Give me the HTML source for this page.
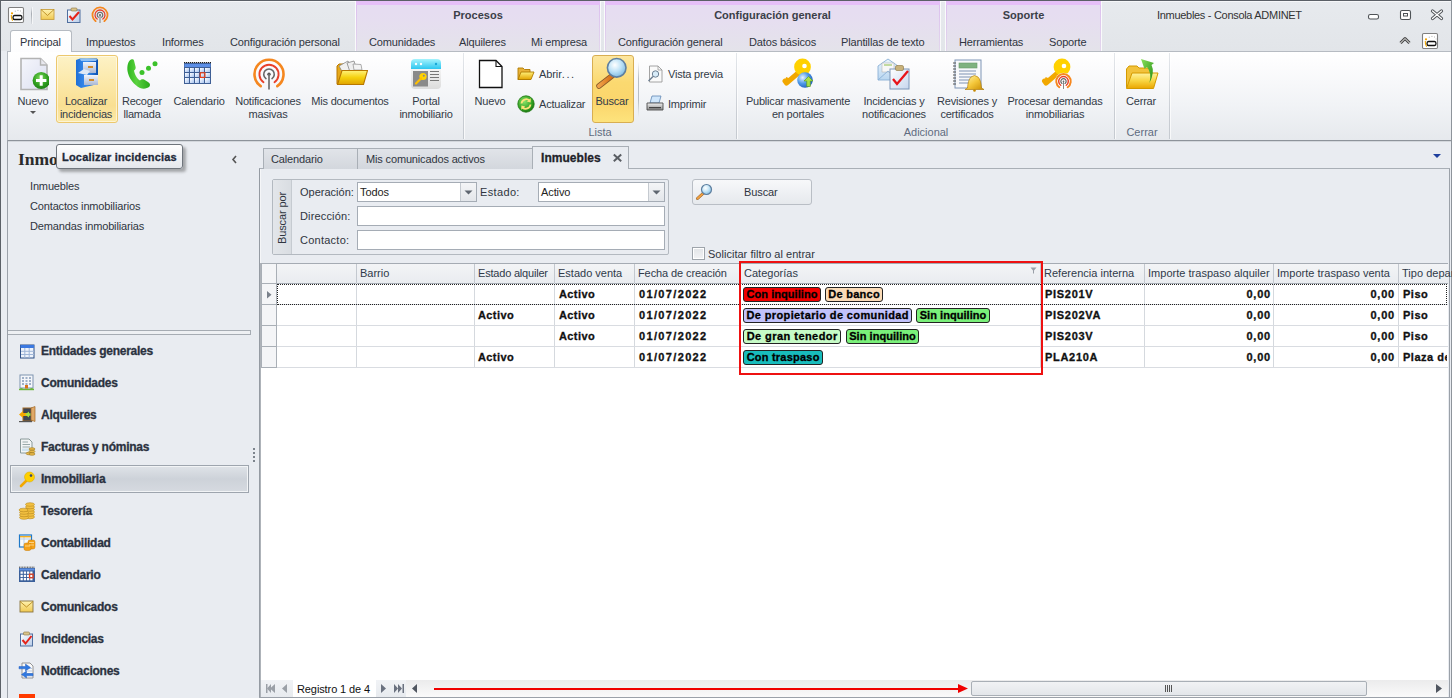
<!DOCTYPE html><html><head><meta charset="utf-8"><style>
html,body{margin:0;padding:0;}
body{width:1452px;height:698px;overflow:hidden;position:relative;background:#e9ecf1;font-family:"Liberation Sans",sans-serif;}
.r{position:absolute;}
.t{position:absolute;white-space:nowrap;}
.g{-webkit-text-stroke:0.3px currentColor;}
</style></head><body>
<div class="r" style="left:0px;top:0px;width:1452px;height:51px;background:linear-gradient(#e7eaee,#e2e5e9);"></div>
<div class="r" style="left:0px;top:0px;width:1452px;height:1px;background:#5b6067;"></div>
<div class="r" style="left:0px;top:0px;width:1px;height:698px;background:#5b6067;"></div>
<div class="r" style="left:1px;top:1px;width:1451px;height:1px;background:#f6f7f9;"></div>
<div class="r" style="left:356px;top:1px;width:244px;height:50px;background:linear-gradient(#e6dcf2,#e6def0 40%,#e4e3ea);"></div>
<div class="r" style="left:356px;top:1px;width:244px;height:4px;background:#e6bff8;"></div>
<div class="r" style="left:356px;top:5px;width:1px;height:46px;background:linear-gradient(#dcc0ee,#e2d6ec);"></div>
<div class="r" style="left:599px;top:5px;width:1px;height:46px;background:linear-gradient(#dcc0ee,#e2d6ec);"></div>
<div class="r" style="left:355px;top:1px;width:1px;height:50px;background:rgba(255,255,255,.8);"></div>
<div class="r" style="left:600px;top:1px;width:1px;height:50px;background:rgba(255,255,255,.8);"></div>
<div class="t" style="left:356px;width:244px;text-align:center;top:8px;font-size:11px;line-height:14px;font-weight:700;color:#3b4048;">Procesos</div>
<div class="r" style="left:605px;top:1px;width:335px;height:50px;background:linear-gradient(#e6dcf2,#e6def0 40%,#e4e3ea);"></div>
<div class="r" style="left:605px;top:1px;width:335px;height:4px;background:#e6bff8;"></div>
<div class="r" style="left:605px;top:5px;width:1px;height:46px;background:linear-gradient(#dcc0ee,#e2d6ec);"></div>
<div class="r" style="left:939px;top:5px;width:1px;height:46px;background:linear-gradient(#dcc0ee,#e2d6ec);"></div>
<div class="r" style="left:604px;top:1px;width:1px;height:50px;background:rgba(255,255,255,.8);"></div>
<div class="r" style="left:940px;top:1px;width:1px;height:50px;background:rgba(255,255,255,.8);"></div>
<div class="t" style="left:605px;width:335px;text-align:center;top:8px;font-size:11px;line-height:14px;font-weight:700;color:#3b4048;">Configuración general</div>
<div class="r" style="left:946px;top:1px;width:155px;height:50px;background:linear-gradient(#e6dcf2,#e6def0 40%,#e4e3ea);"></div>
<div class="r" style="left:946px;top:1px;width:155px;height:4px;background:#e6bff8;"></div>
<div class="r" style="left:946px;top:5px;width:1px;height:46px;background:linear-gradient(#dcc0ee,#e2d6ec);"></div>
<div class="r" style="left:1100px;top:5px;width:1px;height:46px;background:linear-gradient(#dcc0ee,#e2d6ec);"></div>
<div class="r" style="left:945px;top:1px;width:1px;height:50px;background:rgba(255,255,255,.8);"></div>
<div class="r" style="left:1101px;top:1px;width:1px;height:50px;background:rgba(255,255,255,.8);"></div>
<div class="t" style="left:946px;width:155px;text-align:center;top:8px;font-size:11px;line-height:14px;font-weight:700;color:#3b4048;">Soporte</div>
<div class="t" style="left:1157px;top:8.19px;font-size:11px;line-height:14px;font-weight:400;color:#333;letter-spacing:-0.3px;">Inmuebles - Consola ADMINET</div>
<div class="r" style="left:7px;top:51px;width:1444px;height:90px;background:linear-gradient(#ffffff 0%,#fcfcfd 15%,#f1f3f6 60%,#e6e9ed);border-top:1px solid #b6bbc2;border-bottom:1px solid #8d939a;border-left:1px solid #b6bbc2;box-sizing:border-box;"></div>
<div class="r" style="left:8px;top:141px;width:1443px;height:1px;background:#d3d7dc;"></div>
<div class="r" style="left:1451px;top:0px;width:1px;height:698px;background:#8e949b;"></div>
<div class="r" style="left:10px;top:30px;width:62px;height:22px;background:linear-gradient(#ffffff,#fdfdfe);border:1px solid #b6bbc2;border-bottom:none;border-radius:3px 3px 0 0;box-sizing:border-box;"></div>
<div class="t" style="left:20px;top:35.19px;font-size:11px;line-height:14px;font-weight:400;color:#2f3540;letter-spacing:-0.15px;">Principal</div>
<div class="t" style="left:86px;top:35.19px;font-size:11px;line-height:14px;font-weight:400;color:#2f3540;letter-spacing:-0.15px;">Impuestos</div>
<div class="t" style="left:162px;top:35.19px;font-size:11px;line-height:14px;font-weight:400;color:#2f3540;letter-spacing:-0.15px;">Informes</div>
<div class="t" style="left:230px;top:35.19px;font-size:11px;line-height:14px;font-weight:400;color:#2f3540;letter-spacing:-0.15px;">Configuración personal</div>
<div class="t" style="left:369px;top:35.19px;font-size:11px;line-height:14px;font-weight:400;color:#2f3540;letter-spacing:-0.15px;">Comunidades</div>
<div class="t" style="left:459px;top:35.19px;font-size:11px;line-height:14px;font-weight:400;color:#2f3540;letter-spacing:-0.15px;">Alquileres</div>
<div class="t" style="left:531px;top:35.19px;font-size:11px;line-height:14px;font-weight:400;color:#2f3540;letter-spacing:-0.15px;">Mi empresa</div>
<div class="t" style="left:618px;top:35.19px;font-size:11px;line-height:14px;font-weight:400;color:#2f3540;letter-spacing:-0.15px;">Configuración general</div>
<div class="t" style="left:749px;top:35.19px;font-size:11px;line-height:14px;font-weight:400;color:#2f3540;letter-spacing:-0.15px;">Datos básicos</div>
<div class="t" style="left:841px;top:35.19px;font-size:11px;line-height:14px;font-weight:400;color:#2f3540;letter-spacing:-0.15px;">Plantillas de texto</div>
<div class="t" style="left:959px;top:35.19px;font-size:11px;line-height:14px;font-weight:400;color:#2f3540;letter-spacing:-0.15px;">Herramientas</div>
<div class="t" style="left:1049px;top:35.19px;font-size:11px;line-height:14px;font-weight:400;color:#2f3540;letter-spacing:-0.15px;">Soporte</div>
<div class="r" style="left:56px;top:55px;width:62px;height:68px;background:linear-gradient(#fdf2c6,#fbe7a6 45%,#f9df92 75%,#fbe9a8);border:1px solid #ecc86e;border-radius:3px;box-shadow:inset 0 0 0 1px rgba(255,255,255,.5);box-sizing:border-box;"></div>
<div class="r" style="left:592px;top:55px;width:42px;height:68px;background:linear-gradient(#fde7a0,#fbd970 40%,#fbd56c 70%,#fde37c);border:1px solid #d8ae52;border-radius:3px;box-sizing:border-box;"></div>
<div class="t" style="left:-27px;width:120px;text-align:center;top:95.3px;font-size:11px;line-height:13px;color:#333b47;letter-spacing:-0.2px;">Nuevo</div>
<svg class="r" style="left:29px;top:110px" width="8" height="5" viewBox="0 0 8 5"><path d="M1 1 L7 1 L4 4 Z" fill="#555"/></svg>
<div class="t" style="left:26px;width:120px;text-align:center;top:95.3px;font-size:11px;line-height:13px;color:#333b47;letter-spacing:-0.2px;">Localizar</div>
<div class="t" style="left:26px;width:120px;text-align:center;top:108.3px;font-size:11px;line-height:13px;color:#333b47;letter-spacing:-0.2px;">incidencias</div>
<div class="t" style="left:82px;width:120px;text-align:center;top:95.3px;font-size:11px;line-height:13px;color:#333b47;letter-spacing:-0.2px;">Recoger</div>
<div class="t" style="left:82px;width:120px;text-align:center;top:108.3px;font-size:11px;line-height:13px;color:#333b47;letter-spacing:-0.2px;">llamada</div>
<div class="t" style="left:139px;width:120px;text-align:center;top:95.3px;font-size:11px;line-height:13px;color:#333b47;letter-spacing:-0.2px;">Calendario</div>
<div class="t" style="left:208px;width:120px;text-align:center;top:95.3px;font-size:11px;line-height:13px;color:#333b47;letter-spacing:-0.2px;">Notificaciones</div>
<div class="t" style="left:208px;width:120px;text-align:center;top:108.3px;font-size:11px;line-height:13px;color:#333b47;letter-spacing:-0.2px;">masivas</div>
<div class="t" style="left:290px;width:120px;text-align:center;top:95.3px;font-size:11px;line-height:13px;color:#333b47;letter-spacing:-0.2px;">Mis documentos</div>
<div class="t" style="left:366px;width:120px;text-align:center;top:95.3px;font-size:11px;line-height:13px;color:#333b47;letter-spacing:-0.2px;">Portal</div>
<div class="t" style="left:366px;width:120px;text-align:center;top:108.3px;font-size:11px;line-height:13px;color:#333b47;letter-spacing:-0.2px;">inmobiliario</div>
<div class="t" style="left:430px;width:120px;text-align:center;top:95.3px;font-size:11px;line-height:13px;color:#333b47;letter-spacing:-0.2px;">Nuevo</div>
<div class="t" style="left:552px;width:120px;text-align:center;top:95.3px;font-size:11px;line-height:13px;color:#333b47;letter-spacing:-0.2px;">Buscar</div>
<div class="t" style="left:539px;top:67.19px;font-size:11px;line-height:14px;font-weight:400;color:#333b47;letter-spacing:-0.1px;">Abrir<span style="letter-spacing:1.6px">...</span></div>
<div class="t" style="left:539px;top:97.19px;font-size:11px;line-height:14px;font-weight:400;color:#333b47;letter-spacing:-0.2px;">Actualizar</div>
<div class="t" style="left:668px;top:67.19px;font-size:11px;line-height:14px;font-weight:400;color:#333b47;letter-spacing:-0.2px;">Vista previa</div>
<div class="t" style="left:668px;top:97.19px;font-size:11px;line-height:14px;font-weight:400;color:#333b47;letter-spacing:-0.2px;">Imprimir</div>
<div class="r" style="left:638px;top:62px;width:1px;height:55px;background:linear-gradient(rgba(180,185,192,0),#b8bdc4 30%,#b8bdc4 70%,rgba(180,185,192,0));"></div>
<div class="t" style="left:738px;width:120px;text-align:center;top:95.3px;font-size:11px;line-height:13px;color:#333b47;letter-spacing:-0.2px;">Publicar masivamente</div>
<div class="t" style="left:738px;width:120px;text-align:center;top:108.3px;font-size:11px;line-height:13px;color:#333b47;letter-spacing:-0.2px;">en portales</div>
<div class="t" style="left:834px;width:120px;text-align:center;top:95.3px;font-size:11px;line-height:13px;color:#333b47;letter-spacing:-0.2px;">Incidencias y</div>
<div class="t" style="left:834px;width:120px;text-align:center;top:108.3px;font-size:11px;line-height:13px;color:#333b47;letter-spacing:-0.2px;">notificaciones</div>
<div class="t" style="left:907px;width:120px;text-align:center;top:95.3px;font-size:11px;line-height:13px;color:#333b47;letter-spacing:-0.2px;">Revisiones y</div>
<div class="t" style="left:907px;width:120px;text-align:center;top:108.3px;font-size:11px;line-height:13px;color:#333b47;letter-spacing:-0.2px;">certificados</div>
<div class="t" style="left:995px;width:120px;text-align:center;top:95.3px;font-size:11px;line-height:13px;color:#333b47;letter-spacing:-0.2px;">Procesar demandas</div>
<div class="t" style="left:995px;width:120px;text-align:center;top:108.3px;font-size:11px;line-height:13px;color:#333b47;letter-spacing:-0.2px;">inmobiliarias</div>
<div class="t" style="left:1081px;width:120px;text-align:center;top:95.3px;font-size:11px;line-height:13px;color:#333b47;letter-spacing:-0.2px;">Cerrar</div>
<div class="t" style="left:550px;width:100px;text-align:center;top:126.3px;font-size:11px;line-height:13px;color:#5f6b80;">Lista</div>
<div class="t" style="left:876px;width:100px;text-align:center;top:126.3px;font-size:11px;line-height:13px;color:#5f6b80;">Adicional</div>
<div class="t" style="left:1092px;width:100px;text-align:center;top:126.3px;font-size:11px;line-height:13px;color:#5f6b80;">Cerrar</div>
<div class="r" style="left:463px;top:53px;width:1px;height:86px;background:linear-gradient(#e4e7eb,#c9cdd3 70%,#c5cad0);"></div>
<div class="r" style="left:464px;top:53px;width:1px;height:86px;background:rgba(255,255,255,.7);"></div>
<div class="r" style="left:736px;top:53px;width:1px;height:86px;background:linear-gradient(#e4e7eb,#c9cdd3 70%,#c5cad0);"></div>
<div class="r" style="left:737px;top:53px;width:1px;height:86px;background:rgba(255,255,255,.7);"></div>
<div class="r" style="left:1114px;top:53px;width:1px;height:86px;background:linear-gradient(#e4e7eb,#c9cdd3 70%,#c5cad0);"></div>
<div class="r" style="left:1115px;top:53px;width:1px;height:86px;background:rgba(255,255,255,.7);"></div>
<div class="r" style="left:1169px;top:53px;width:1px;height:86px;background:linear-gradient(#e4e7eb,#c9cdd3 70%,#c5cad0);"></div>
<div class="r" style="left:1170px;top:53px;width:1px;height:86px;background:rgba(255,255,255,.7);"></div>
<svg class="r" style="left:19px;top:57px" width="30" height="34" viewBox="0 0 30 34"><defs><linearGradient id="pg1" x1="0" y1="0" x2="1" y2="1"><stop offset="0" stop-color="#f5f6fc"/><stop offset="1" stop-color="#dcdff0"/></linearGradient>
<radialGradient id="gr1" cx=".45" cy=".35" r=".7"><stop offset="0" stop-color="#7edb5a"/><stop offset=".6" stop-color="#2f9e1f"/><stop offset="1" stop-color="#1d7a12"/></radialGradient></defs>
<path d="M2 1.5 H21.5 L28 8 V32.5 H2 Z" fill="url(#pg1)" stroke="#b3b3b3" stroke-width="1.6"/>
<path d="M21.5 1.5 V8 H28" fill="#e8e8ee" stroke="#b3b3b3" stroke-width="1.4"/>
<circle cx="22.2" cy="23.5" r="8.6" fill="url(#gr1)"/>
<path d="M22.2 18.3 V28.7 M17 23.5 H27.4" stroke="#fff" stroke-width="3"/></svg>
<svg class="r" style="left:74px;top:57px" width="26" height="33" viewBox="0 0 26 33"><defs><linearGradient id="fc1" x1="0" x2="1"><stop offset="0" stop-color="#1f6fd6"/><stop offset=".5" stop-color="#3b8ff0"/><stop offset="1" stop-color="#0b4fb0"/></linearGradient>
<linearGradient id="fc2" x1="0" y1="0" x2="0" y2="1"><stop offset="0" stop-color="#f2f5fb"/><stop offset="1" stop-color="#a9b7d3"/></linearGradient></defs>
<path d="M2 3 L6 1.5 H23 L24 3 V27 L7 31 L2 28 Z" fill="url(#fc1)"/>
<path d="M6 2 H23 L22 4 H7Z" fill="#8fc0f5"/>
<rect x="9" y="5" width="13" height="11" fill="url(#fc2)"/>
<rect x="10" y="18" width="14" height="10" fill="url(#fc2)"/>
<path d="M4 16 L10 12 L16 14 L13 18 Z" fill="#dfe9f6"/>
<rect x="14" y="9" width="5" height="2" fill="#d08a2a"/><rect x="15" y="22" width="5" height="2" fill="#d08a2a"/></svg>
<svg class="r" style="left:126px;top:57px" width="32" height="34" viewBox="0 0 32 34"><defs><linearGradient id="ph" x1="0" x2="1"><stop offset="0" stop-color="#2fb51e"/><stop offset=".4" stop-color="#5ad23f"/><stop offset="1" stop-color="#2aa81a"/></linearGradient></defs>
<path d="M5 2.5 C2 4 1 9 1.5 14 C2.5 21 8 28 14 31 C18 32.5 21 31.5 23.5 29.5 C24.5 28 24 26 22 25 L18 22.5 C16.5 21.8 15 22.5 14 23.5 C11 22 8.5 17 8 13.5 C9.5 12.5 10 11 9.5 9.5 L8 3.5 C7.5 2 6.5 2 5 2.5 Z" fill="url(#ph)"/>
<circle cx="16" cy="15.5" r="2.5" fill="#3cc22a"/><circle cx="22.5" cy="11.3" r="2.5" fill="#3cc22a"/><circle cx="29" cy="6.7" r="2.5" fill="#3cc22a"/></svg>
<svg class="r" style="left:183px;top:61px" width="29" height="24" viewBox="0 0 29 24"><defs><linearGradient id="cb" x1="0" y1="0" x2="1" y2="1"><stop offset="0" stop-color="#ffffff"/><stop offset="1" stop-color="#a8c4f0"/></linearGradient></defs>
<rect x="1" y="2" width="27" height="21" fill="#3f5f95"/>
<rect x="1.5" y="3" width="26" height="3" fill="#5b8ee6"/>
<g fill="url(#cb)">
<rect x="2" y="7" width="4" height="4"/><rect x="7" y="7" width="4" height="4"/><rect x="12" y="7" width="4" height="4"/><rect x="17" y="7" width="4" height="4"/><rect x="22" y="7" width="5" height="4"/>
<rect x="2" y="12" width="4" height="4"/><rect x="7" y="12" width="4" height="4"/><rect x="12" y="12" width="4" height="4"/><rect x="17" y="12" width="4" height="4"/><rect x="22" y="12" width="5" height="4"/>
<rect x="2" y="17" width="4" height="5"/><rect x="7" y="17" width="4" height="5"/><rect x="12" y="17" width="4" height="5"/><rect x="17" y="17" width="4" height="5"/><rect x="22" y="17" width="5" height="5"/></g>
<rect x="17.3" y="11.8" width="4.6" height="4.6" fill="none" stroke="#e8401a" stroke-width="1.2"/>
<path d="M1 1.5 H28" stroke="#222" stroke-width="1" stroke-dasharray="1.3 0.7"/></svg>
<svg class="r" style="left:251px;top:57px" width="36" height="34" viewBox="0 0 36 34"><path d="M9.68 29.18 A14.5 14.5 0 1 1 26.32 29.18" stroke="#f5871f" stroke-width="2.6" fill="none" stroke-linecap="round"/><path d="M12.49 25.16 A9.6 9.6 0 1 1 23.51 25.16" stroke="#e8402a" stroke-width="1.9" fill="none" stroke-linecap="round"/><path d="M14.96 21.64 A5.3 5.3 0 1 1 21.04 21.64" stroke="#666" stroke-width="1.6" fill="none" stroke-linecap="round"/><circle cx="18" cy="17.3" r="1.7" fill="#555"/><path d="M18 17.3 V32.6" stroke="#777" stroke-width="1.8"/></svg>
<svg class="r" style="left:334px;top:58px" width="34" height="29" viewBox="0 0 34 29"><defs><linearGradient id="fy" x1="0" y1="0" x2="0" y2="1"><stop offset="0" stop-color="#fff27a"/><stop offset=".5" stop-color="#f5d10f"/><stop offset="1" stop-color="#e0a300"/></linearGradient></defs>
<path d="M3 8 L5 6 H12 L14 8 V26 H3Z" fill="#e7a91a" stroke="#b87800" stroke-width="1"/>
<path d="M5 8 L14 3 L19 12 L10 17 Z" fill="#f0f0f0" stroke="#888" stroke-width=".8"/>
<path d="M13 5 L20 3 L23 12 L16 14Z" fill="#eee" stroke="#888" stroke-width=".8"/>
<path d="M19 6 L27 6.5 L28 12 L20 12Z" fill="#f3f3f3" stroke="#999" stroke-width=".8"/>
<path d="M8 12.5 H33.5 L29.5 26.5 H3.5 Z" fill="url(#fy)" stroke="#b87800" stroke-width="1.1"/></svg>
<svg class="r" style="left:410px;top:58px" width="32" height="32" viewBox="0 0 32 32"><defs><linearGradient id="pt" x1="0" y1="0" x2="0" y2="1"><stop offset="0" stop-color="#a5f3fd"/><stop offset="1" stop-color="#2cc6f0"/></linearGradient>
<linearGradient id="pb" x1="0" y1="0" x2="0" y2="1"><stop offset="0" stop-color="#f4f4f4"/><stop offset="1" stop-color="#dcdcdc"/></linearGradient></defs>
<path d="M1 11 H31 V27 Q31 31 27 31 H5 Q1 31 1 27Z" fill="url(#pb)"/>
<path d="M1 11 V5 Q1 1 5 1 H27 Q31 1 31 5 V11Z" fill="url(#pt)"/>
<circle cx="6" cy="6" r="1.2" fill="#fff"/><circle cx="11" cy="6" r="1.2" fill="#fff"/><circle cx="26" cy="6" r="1.2" fill="#19a7d8"/>
<rect x="3" y="13" width="15" height="15.5" fill="#8a8a8a"/>
<circle cx="13" cy="18.5" r="3.6" fill="#ffd200"/><circle cx="13.8" cy="17.7" r="1" fill="#8a8a8a"/>
<path d="M11 20.5 L6 25.5" stroke="#ffbf00" stroke-width="2.2" stroke-linecap="round"/>
<path d="M20 13.5 H29 M20 16.5 H29 M20 19.5 H29 M20 22.5 H29" stroke="#777" stroke-width="1"/></svg>
<svg class="r" style="left:478px;top:59px" width="26" height="30" viewBox="0 0 26 30"><path d="M1.5 1.5 H18 L24 7.5 V28.5 H1.5Z" fill="#fff" stroke="#111" stroke-width="1.3"/><path d="M18 1.5 V7.5 H24" fill="none" stroke="#111" stroke-width="1.1"/></svg>
<svg class="r" style="left:517px;top:66px" width="18" height="15" viewBox="0 0 18 15"><defs><linearGradient id="fy2" x1="0" y1="0" x2="0" y2="1"><stop offset="0" stop-color="#fff07a"/><stop offset="1" stop-color="#e3a400"/></linearGradient></defs>
<path d="M1 2 H6 L7.5 3.5 H13 V13.5 H1Z" fill="#e9b23a" stroke="#b07a00" stroke-width=".9"/>
<path d="M4 6 H17 L14 13.5 H1Z" fill="url(#fy2)" stroke="#b07a00" stroke-width=".9"/></svg>
<svg class="r" style="left:517px;top:95px" width="18" height="18" viewBox="0 0 18 18"><defs><radialGradient id="ag" cx=".4" cy=".35" r=".7"><stop offset="0" stop-color="#8be36a"/><stop offset=".7" stop-color="#2f9e1f"/><stop offset="1" stop-color="#1a6f10"/></radialGradient></defs>
<circle cx="9" cy="9" r="8.2" fill="url(#ag)" stroke="#1f7a14" stroke-width=".8"/>
<path d="M4.5 8.5 A4.8 4.8 0 0 1 12.5 5.5" stroke="#ffe27a" stroke-width="1.8" fill="none"/><path d="M13.8 3.2 L13.6 7.5 L9.8 6.5Z" fill="#ffe27a"/>
<path d="M13.5 9.5 A4.8 4.8 0 0 1 5.5 12.5" stroke="#ffe27a" stroke-width="1.8" fill="none"/><path d="M4.2 14.8 L4.4 10.5 L8.2 11.5Z" fill="#ffe27a"/></svg>
<svg class="r" style="left:595px;top:56px" width="34" height="34" viewBox="0 0 34 34"><defs><radialGradient id="lens" cx=".4" cy=".35" r=".7"><stop offset="0" stop-color="#ffffff"/><stop offset=".5" stop-color="#bfe3f7"/><stop offset="1" stop-color="#79b8e0"/></radialGradient>
<linearGradient id="hd" x1="0" x2="1"><stop offset="0" stop-color="#f0a24a"/><stop offset="1" stop-color="#d46d12"/></linearGradient></defs>
<path d="M17.5 19.5 L4 30" stroke="#8a5a2a" stroke-width="5.5" stroke-linecap="round"/>
<path d="M17.5 19.5 L4 30" stroke="url(#hd)" stroke-width="4" stroke-linecap="round"/>
<circle cx="21.7" cy="11.8" r="9.3" fill="url(#lens)" stroke="#5f7f9f" stroke-width="1.6"/></svg>
<svg class="r" style="left:647px;top:65px" width="17" height="18" viewBox="0 0 17 18"><path d="M2.5 1 H11 L15 5 V17 H2.5Z" fill="#fafafa" stroke="#9a9a9a" stroke-width=".9"/><path d="M11 1 V5 H15" fill="none" stroke="#9a9a9a" stroke-width=".8"/>
<circle cx="8.5" cy="9" r="3.2" fill="#d8ecf9" stroke="#6d7f92" stroke-width="1"/><path d="M6 11.5 L1.5 16" stroke="#6d7f92" stroke-width="1.4"/></svg>
<svg class="r" style="left:646px;top:95px" width="18" height="17" viewBox="0 0 18 17"><defs><linearGradient id="pr" x1="0" y1="0" x2="0" y2="1"><stop offset="0" stop-color="#f2f2f2"/><stop offset="1" stop-color="#8b8b8b"/></linearGradient></defs>
<path d="M6 1 H15 L13 8 H4Z" fill="#cfe6fb" stroke="#5f86b3" stroke-width=".8"/>
<path d="M1 8 H17 V15 H1Z" fill="url(#pr)" stroke="#4d4d4d" stroke-width=".9"/><rect x="3" y="12" width="12" height="1.3" fill="#444"/></svg>
<svg class="r" style="left:782px;top:57px" width="34" height="34" viewBox="0 0 34 34"><path d="M18.5 14 L4.5 26 L3.0 24 L5.5 23.5 L6.5 21" stroke="#f2a800" stroke-width="5.0" fill="none" stroke-linejoin="round"/><circle cx="20.5" cy="10" r="8.4" fill="#ffd100"/><circle cx="22.5" cy="9" r="2.3" fill="#fff"/><defs><radialGradient id="gl" cx=".35" cy=".35" r=".75"><stop offset="0" stop-color="#e8f4ff"/><stop offset=".5" stop-color="#4f9ae8"/><stop offset="1" stop-color="#1b56b8"/></radialGradient></defs>
<circle cx="23" cy="23" r="7.8" fill="url(#gl)"/><path d="M26.5 19.5 L31 24 H28.3 V29.5 H24.7 V24 H22Z" fill="#a8e04a" stroke="#5b9a10" stroke-width=".6"/></svg>
<svg class="r" style="left:876px;top:56px" width="36" height="35" viewBox="0 0 36 35"><defs><linearGradient id="ev" x1="0" y1="0" x2="0" y2="1"><stop offset="0" stop-color="#eaf4fc"/><stop offset="1" stop-color="#b9d6f0"/></linearGradient>
<linearGradient id="cp" x1="0" y1="0" x2="1" y2="1"><stop offset="0" stop-color="#ffffff"/><stop offset="1" stop-color="#c6d6ee"/></linearGradient></defs>
<path d="M2 10 L12 3 L22 10 V24 H2Z" fill="url(#ev)" stroke="#8ab0d6" stroke-width=".9"/>
<rect x="6" y="7" width="12" height="9" fill="#f7f7f7" stroke="#aaa" stroke-width=".5"/><path d="M8 9 H16" stroke="#8dbd4a" stroke-width="1"/>
<path d="M2 24 L12 15 L22 24" fill="none" stroke="#8ab0d6" stroke-width=".9"/>
<rect x="14" y="13" width="19" height="20" fill="url(#cp)" stroke="#7d96b8" stroke-width="1"/>
<rect x="19.5" y="9.5" width="8" height="5" rx="1.5" fill="#c9b27a" stroke="#8a7440" stroke-width=".6"/>
<path d="M17 23 L21 28 L32 15" stroke="#e8141a" stroke-width="2.3" fill="none"/></svg>
<svg class="r" style="left:952px;top:58px" width="34" height="34" viewBox="0 0 34 34"><defs><linearGradient id="bl" x1="0" y1="0" x2="1" y2="1"><stop offset="0" stop-color="#fff6b0"/><stop offset=".5" stop-color="#f4c73a"/><stop offset="1" stop-color="#c78a00"/></linearGradient></defs>
<rect x="3" y="2" width="26" height="28" fill="#f8f9fb" stroke="#7f95b5" stroke-width="1"/>
<rect x="7" y="5" width="18" height="5" fill="#7fb27f" stroke="#6a9a6a" stroke-width=".6"/>
<path d="M7 13 H24 M7 16 H24 M7 19 H20 M7 22 H18 M7 25 H18" stroke="#7f93b3" stroke-width="1"/>
<path d="M1 5 H4 M1 8 H4 M1 11 H4 M1 14 H4 M1 17 H4 M1 20 H4 M1 23 H4 M1 26 H4" stroke="#555" stroke-width="1"/>
<path d="M15.5 30 Q16 22 19 19 Q22.5 16 26 19 Q29 22 29.5 30 L32 31.5 H13Z" fill="url(#bl)" stroke="#a87400" stroke-width=".6"/>
<circle cx="22.5" cy="32.5" r="1.3" fill="#c78a00"/></svg>
<svg class="r" style="left:1040px;top:58px" width="36" height="34" viewBox="0 0 36 34"><path d="M20 13 L6 25 L4.5 23 L7 22.5 L8 20" stroke="#f2a800" stroke-width="5.0" fill="none" stroke-linejoin="round"/><circle cx="22" cy="9" r="8.4" fill="#ffd100"/><circle cx="24" cy="8" r="2.3" fill="#fff"/><circle cx="23.5" cy="23.3" r="8.5" fill="#fff" opacity=".85"/><path d="M19.34 29.24 A7.25 7.25 0 1 1 27.66 29.24" stroke="#f5871f" stroke-width="1.9500000000000002" fill="none" stroke-linecap="round"/><path d="M20.75 27.23 A4.8 4.8 0 1 1 26.25 27.23" stroke="#e8402a" stroke-width="1.4249999999999998" fill="none" stroke-linecap="round"/><path d="M21.98 25.47 A2.65 2.65 0 1 1 25.02 25.47" stroke="#666" stroke-width="1.2000000000000002" fill="none" stroke-linecap="round"/><circle cx="23.5" cy="23.3" r="0.85" fill="#555"/><path d="M23.5 23.3 V30.950000000000003" stroke="#777" stroke-width="0.9"/></svg>
<svg class="r" style="left:1124px;top:56px" width="36" height="35" viewBox="0 0 36 35"><defs><linearGradient id="fy3" x1="0" y1="0" x2="0" y2="1"><stop offset="0" stop-color="#fff3a0"/><stop offset=".5" stop-color="#f8d542"/><stop offset="1" stop-color="#eaa600"/></linearGradient>
<linearGradient id="ga" x1="0" y1="0" x2="1" y2="1"><stop offset="0" stop-color="#8ae05a"/><stop offset="1" stop-color="#1e8a10"/></linearGradient></defs>
<path d="M2.5 13 L5 10 H13 L15 12 H27 V31.5 H2.5Z" fill="#f2c23b" stroke="#d49a00" stroke-width="1"/>
<path d="M8 17 H34 L29.5 32.5 H2.5Z" fill="url(#fy3)" stroke="#d49a00" stroke-width="1"/>
<path d="M17 3 L30 7 L27.5 9 Q31 16 25.5 27 Q28 17 23 11 L20.5 13Z" fill="url(#ga)"/></svg>
<svg class="r" style="left:7px;top:6px" width="18" height="18" viewBox="0 0 18 18"><rect x="1.5" y="1.5" width="15" height="15" rx="1.2" fill="#fff" stroke="#808080" stroke-width="1.1"/>
<path d="M7.5 9.5 H13.5 Q15 9.5 15 11.5 Q15 13.5 13.5 13.5 H7.5 Q6 13.5 6 11.5 Q6 9.5 7.5 9.5Z" fill="none" stroke="#111" stroke-width="1.3"/>
<circle cx="5" cy="7.3" r="1.1" fill="#f0a000"/><path d="M4.3 9 Q4 12 5.6 14.8" stroke="#f2a800" stroke-width="1.1" fill="none"/>
<path d="M7.8 5.2 h.9 M10.5 4.4 h.9 M13 5 h.8 M14.8 7 h.6" stroke="#999" stroke-width=".9"/></svg>
<div class="r" style="left:31px;top:7px;width:1px;height:17px;background:linear-gradient(rgba(160,165,172,0),#a7acb3 40%,rgba(160,165,172,.2));"></div>
<div class="r" style="left:32px;top:7px;width:1px;height:17px;background:rgba(255,255,255,.6);"></div>
<svg class="r" style="left:40px;top:8px" width="15" height="13" viewBox="0 0 15 13"><defs><linearGradient id="ml" x1="0" y1="0" x2="0" y2="1"><stop offset="0" stop-color="#fff3b0"/><stop offset="1" stop-color="#f0c850"/></linearGradient></defs>
<rect x="1" y="1.5" width="13" height="10" fill="url(#ml)" stroke="#c9a040" stroke-width=".9"/><path d="M1 1.5 L7.5 7.5 L14 1.5" fill="none" stroke="#b88a20" stroke-width=".9"/></svg>
<svg class="r" style="left:66px;top:7px" width="16" height="16" viewBox="0 0 16 16"><defs><linearGradient id="tk" x1="0" y1="0" x2="1" y2="1"><stop offset="0" stop-color="#fff"/><stop offset="1" stop-color="#b7cbe8"/></linearGradient></defs>
<rect x="1.5" y="3" width="12.5" height="12.5" fill="url(#tk)" stroke="#4f6f9f" stroke-width="1"/><rect x="5" y="1" width="6" height="3" rx="1" fill="#d9c48a" stroke="#8a7440" stroke-width=".6"/>
<path d="M3.5 9 L6.5 12.5 L13 5" stroke="#e5241a" stroke-width="2" fill="none"/></svg>
<svg class="r" style="left:91px;top:6px" width="18" height="18" viewBox="0 0 18 18"><path d="M4.68 15.18 A7.54 7.54 0 1 1 13.32 15.18" stroke="#f5871f" stroke-width="1.7576000000000003" fill="none" stroke-linecap="round"/><path d="M6.14 13.09 A4.992 4.992 0 1 1 11.86 13.09" stroke="#e8402a" stroke-width="1.2844" fill="none" stroke-linecap="round"/><path d="M7.42 11.26 A2.756 2.756 0 1 1 10.58 11.26" stroke="#666" stroke-width="1.0816000000000001" fill="none" stroke-linecap="round"/><circle cx="9" cy="9" r="0.884" fill="#555"/><path d="M9 9 V16.956" stroke="#777" stroke-width="0.936"/></svg>
<svg class="r" style="left:1366px;top:12px" width="14" height="9" viewBox="0 0 14 9"><rect x="2.5" y="2.5" width="10" height="4.5" rx="1.8" fill="#fff" stroke="#4f5357" stroke-width="1.1"/></svg>
<svg class="r" style="left:1398px;top:8px" width="14" height="13" viewBox="0 0 14 13"><rect x="2.5" y="2.5" width="10" height="9" rx="1.5" fill="#fff" stroke="#4f5357" stroke-width="1.1"/><rect x="5.5" y="5.5" width="4" height="2.5" fill="none" stroke="#4f5357" stroke-width="1"/></svg>
<svg class="r" style="left:1429px;top:8px" width="15" height="13" viewBox="0 0 15 13"><path d="M3.5 3 L12.5 10.5 M12.5 3 L3.5 10.5" stroke="#4f5357" stroke-width="3.2" stroke-linecap="round"/><path d="M3.5 3 L12.5 10.5 M12.5 3 L3.5 10.5" stroke="#fff" stroke-width="1.3" stroke-linecap="round"/></svg>
<svg class="r" style="left:1399px;top:36px" width="12" height="9" viewBox="0 0 12 9"><path d="M1.5 7 L6 2.5 L10.5 7" stroke="#444" stroke-width="3" fill="none" stroke-linejoin="round"/><path d="M1.5 7 L6 2.5 L10.5 7" stroke="#fff" stroke-width="1" fill="none"/></svg>
<svg class="r" style="left:1421px;top:32px" width="18" height="18" viewBox="0 0 18 18"><rect x="1.5" y="1.5" width="15" height="15" rx="1.2" fill="#fff" stroke="#808080" stroke-width="1.1"/>
<path d="M7.5 9.5 H13.5 Q15 9.5 15 11.5 Q15 13.5 13.5 13.5 H7.5 Q6 13.5 6 11.5 Q6 9.5 7.5 9.5Z" fill="none" stroke="#111" stroke-width="1.3"/>
<circle cx="5" cy="7.3" r="1.1" fill="#f0a000"/><path d="M4.3 9 Q4 12 5.6 14.8" stroke="#f2a800" stroke-width="1.1" fill="none"/>
<path d="M7.8 5.2 h.9 M10.5 4.4 h.9 M13 5 h.8 M14.8 7 h.6" stroke="#999" stroke-width=".9"/></svg>
<div class="r" style="left:7px;top:140px;width:1px;height:558px;background:#9ba1a9;"></div>
<div class="t" style="left:18px;top:149px;font-family:'Liberation Serif',serif;font-size:17.5px;line-height:20px;font-weight:700;color:#2b2b2b;">Inmobiliaria</div>
<svg class="r" style="left:231px;top:155px" width="7" height="9" viewBox="0 0 7 9"><path d="M5 1 L2 4.5 L5 8" stroke="#555" stroke-width="1.6" fill="none"/></svg>
<div class="t" style="left:30px;top:179.19px;font-size:11px;line-height:14px;font-weight:400;color:#2f3540;letter-spacing:-0.15px;">Inmuebles</div>
<div class="t" style="left:30px;top:199.19px;font-size:11px;line-height:14px;font-weight:400;color:#2f3540;letter-spacing:-0.15px;">Contactos inmobiliarios</div>
<div class="t" style="left:30px;top:219.19px;font-size:11px;line-height:14px;font-weight:400;color:#2f3540;letter-spacing:-0.15px;">Demandas inmobiliarias</div>
<div class="r" style="left:8px;top:330px;width:243px;height:5px;background:#eef0f3;border-top:1px solid #a6acb3;border-bottom:1px solid #a6acb3;border-right:1px solid #a6acb3;box-sizing:border-box;"></div>
<div class="r" style="left:10px;top:465px;width:239px;height:28px;background:linear-gradient(#dfe3e8,#cdd2d9 50%,#d6dae0);border:1px solid #9ea5ae;box-shadow:inset 0 0 0 1px #f2f4f6;box-sizing:border-box;"></div>
<div class="t g" style="left:41px;top:344.34px;font-size:12px;line-height:15px;font-weight:700;color:#2b3240;letter-spacing:-0.25px;">Entidades generales</div>
<div class="t g" style="left:41px;top:376.34px;font-size:12px;line-height:15px;font-weight:700;color:#2b3240;letter-spacing:-0.25px;">Comunidades</div>
<div class="t g" style="left:41px;top:408.34px;font-size:12px;line-height:15px;font-weight:700;color:#2b3240;letter-spacing:-0.25px;">Alquileres</div>
<div class="t g" style="left:41px;top:440.34px;font-size:12px;line-height:15px;font-weight:700;color:#2b3240;letter-spacing:-0.25px;">Facturas y nóminas</div>
<div class="t g" style="left:41px;top:472.34px;font-size:12px;line-height:15px;font-weight:700;color:#2b3240;letter-spacing:-0.25px;">Inmobiliaria</div>
<div class="t g" style="left:41px;top:504.34px;font-size:12px;line-height:15px;font-weight:700;color:#2b3240;letter-spacing:-0.25px;">Tesorería</div>
<div class="t g" style="left:41px;top:536.34px;font-size:12px;line-height:15px;font-weight:700;color:#2b3240;letter-spacing:-0.25px;">Contabilidad</div>
<div class="t g" style="left:41px;top:568.34px;font-size:12px;line-height:15px;font-weight:700;color:#2b3240;letter-spacing:-0.25px;">Calendario</div>
<div class="t g" style="left:41px;top:600.34px;font-size:12px;line-height:15px;font-weight:700;color:#2b3240;letter-spacing:-0.25px;">Comunicados</div>
<div class="t g" style="left:41px;top:632.34px;font-size:12px;line-height:15px;font-weight:700;color:#2b3240;letter-spacing:-0.25px;">Incidencias</div>
<div class="t g" style="left:41px;top:664.34px;font-size:12px;line-height:15px;font-weight:700;color:#2b3240;letter-spacing:-0.25px;">Notificaciones</div>
<div class="r" style="left:253px;top:448px;width:2px;height:2px;background:#7d848d;"></div>
<div class="r" style="left:253px;top:452px;width:2px;height:2px;background:#7d848d;"></div>
<div class="r" style="left:253px;top:456px;width:2px;height:2px;background:#7d848d;"></div>
<div class="r" style="left:253px;top:460px;width:2px;height:2px;background:#7d848d;"></div>
<svg class="r" style="left:19px;top:344px" width="16" height="15" viewBox="0 0 16 15"><rect x="1.5" y="1" width="13.5" height="13" fill="#eef3fb" stroke="#2d4f86" stroke-width="1"/><rect x="1.5" y="1" width="13.5" height="3" fill="#3b78e0"/>
<path d="M2 7.3 H15 M2 10.5 H15 M5.8 4 V14 M10.2 4 V14" stroke="#9fb6d8" stroke-width="1"/></svg>
<svg class="r" style="left:18px;top:374px" width="17" height="17" viewBox="0 0 17 17"><rect x="2" y="1" width="13" height="13" fill="#f4f6fa" stroke="#7f93b0" stroke-width="1"/>
<g fill="#9fb0c8"><rect x="4" y="3" width="2" height="2"/><rect x="7.5" y="3" width="2" height="2"/><rect x="11" y="3" width="2" height="2"/><rect x="4" y="6" width="2" height="2"/><rect x="7.5" y="6" width="2" height="2"/><rect x="11" y="6" width="2" height="2"/><rect x="4" y="9" width="2" height="2"/><rect x="7.5" y="9" width="2" height="2"/><rect x="11" y="9" width="2" height="2"/></g>
<rect x="7" y="11" width="3" height="3.5" fill="#d9731a"/><path d="M1 15.5 Q3 12.5 6 15.5 Z M11 15.5 Q14 12.5 16 15.5Z" fill="#6bb53a"/><rect x="1" y="14.8" width="15" height="1.4" fill="#6bb53a"/></svg>
<svg class="r" style="left:18px;top:406px" width="18" height="17" viewBox="0 0 18 17"><rect x="5" y="2" width="9" height="13" fill="#3d4552" stroke="#a06a2a" stroke-width="1"/><path d="M13 2 L17 0.5 V15.5 L13 14Z" fill="#e0a868" stroke="#a06a2a" stroke-width=".7"/>
<path d="M1 8.5 L5 5 V7 H11 V10 H5 V12Z" fill="#f5a800"/><path d="M7 8.5 L11 5.5 V7.3 H12.5 V9.7 H11 V11.5Z" fill="#a4e040"/><rect x="1" y="15" width="13" height="1.2" fill="#555"/></svg>
<svg class="r" style="left:19px;top:438px" width="17" height="18" viewBox="0 0 17 18"><path d="M1.5 1 H10 L13 4 V15 H1.5Z" fill="#f2f5f5" stroke="#8a9a9a" stroke-width="1"/><path d="M3.5 4 H9 M3.5 6.5 H11 M3.5 9 H11" stroke="#9aa" stroke-width="1"/><rect x="3" y="10.5" width="8" height="2.5" fill="#cfe3ee"/>
<g fill="#e7b84a" stroke="#a07818" stroke-width=".6"><ellipse cx="13" cy="11" rx="3" ry="1.3"/><ellipse cx="13" cy="13.5" rx="3" ry="1.3"/><ellipse cx="10" cy="15.5" rx="3" ry="1.3"/><ellipse cx="13" cy="16" rx="3" ry="1.3"/></g></svg>
<svg class="r" style="left:19px;top:471px" width="17" height="17" viewBox="0 0 17 17"><path d="M8 9 L2 15" stroke="#f2a800" stroke-width="2.6" stroke-linecap="round"/><circle cx="10.5" cy="6" r="5" fill="#ffd000" stroke="#d9a600" stroke-width=".5"/><circle cx="12" cy="4.6" r="1.3" fill="#3a4a6a"/></svg>
<svg class="r" style="left:18px;top:502px" width="18" height="18" viewBox="0 0 18 18"><g fill="#f2c040" stroke="#b88a20" stroke-width=".6"><ellipse cx="12" cy="15" rx="4.5" ry="1.8"/><ellipse cx="12" cy="12.5" rx="4.5" ry="1.8"/><ellipse cx="12" cy="10" rx="4.5" ry="1.8"/><ellipse cx="12" cy="7.5" rx="4.5" ry="1.8"/><ellipse cx="12" cy="5" rx="4.5" ry="1.8"/><ellipse cx="12" cy="2.5" rx="4.5" ry="1.8"/>
<ellipse cx="6" cy="15.5" rx="4.5" ry="1.8"/><ellipse cx="6" cy="13" rx="4.5" ry="1.8"/><ellipse cx="6" cy="10.5" rx="4.5" ry="1.8"/><ellipse cx="5.5" cy="8" rx="4.5" ry="1.8"/></g></svg>
<svg class="r" style="left:18px;top:534px" width="18" height="17" viewBox="0 0 18 17"><rect x="1.5" y="1" width="12" height="12" fill="#fafafa" stroke="#1e78c8" stroke-width="1.2"/><path d="M2 5 H13 M6 2 V12" stroke="#b8cfe8" stroke-width="1"/><rect x="2" y="2" width="11" height="1.4" fill="#f5b020"/>
<g fill="#f5a21a" stroke="#c87a00" stroke-width=".5"><rect x="10" y="6" width="7" height="9" rx="2"/><rect x="6" y="9" width="7" height="7.5" rx="2"/></g><path d="M7 12 H12 M11 8.5 H16 M11 11 H16" stroke="#ffe0a0" stroke-width=".8"/></svg>
<svg class="r" style="left:18px;top:566px" width="18" height="17" viewBox="0 0 18 17"><rect x="1" y="2" width="16" height="14" fill="#3a5f9a"/><rect x="1.5" y="2.5" width="15" height="2" fill="#5d8fe3"/>
<g fill="#fff"><rect x="2.5" y="5.5" width="2.3" height="2.3"/><rect x="5.8" y="5.5" width="2.3" height="2.3"/><rect x="9" y="5.5" width="2.3" height="2.3"/><rect x="12.2" y="5.5" width="2.3" height="2.3"/><rect x="2.5" y="8.8" width="2.3" height="2.3"/><rect x="5.8" y="8.8" width="2.3" height="2.3"/><rect x="9" y="8.8" width="2.3" height="2.3"/><rect x="12.2" y="8.8" width="2.3" height="2.3"/><rect x="2.5" y="12" width="2.3" height="2.3"/><rect x="5.8" y="12" width="2.3" height="2.3"/><rect x="9" y="12" width="2.3" height="2.3"/><rect x="12.2" y="12" width="2.3" height="2.3"/></g>
<rect x="11.5" y="8.2" width="3.6" height="3.6" fill="none" stroke="#e8401a" stroke-width="1.2"/><path d="M1 1.2 H17" stroke="#222" stroke-width=".9" stroke-dasharray="1 .6"/></svg>
<svg class="r" style="left:19px;top:600px" width="15" height="13" viewBox="0 0 15 13"><defs><linearGradient id="ml2" x1="0" y1="0" x2="0" y2="1"><stop offset="0" stop-color="#fff3b0"/><stop offset="1" stop-color="#f0c850"/></linearGradient></defs>
<rect x="1" y="1" width="13" height="11" fill="url(#ml2)" stroke="#8a7440" stroke-width=".9"/><path d="M1 1.5 L7.5 7 L14 1.5" fill="none" stroke="#b88a20" stroke-width=".9"/></svg>
<svg class="r" style="left:19px;top:631px" width="15" height="16" viewBox="0 0 15 16"><defs><linearGradient id="tk2" x1="0" y1="0" x2="1" y2="1"><stop offset="0" stop-color="#fff"/><stop offset="1" stop-color="#b7cbe8"/></linearGradient></defs>
<rect x="1.5" y="3" width="12" height="12" fill="url(#tk2)" stroke="#4f6f9f" stroke-width="1"/><rect x="4.5" y="1" width="6" height="3" rx="1" fill="#d9c48a" stroke="#8a7440" stroke-width=".6"/>
<path d="M3.5 9 L6.5 12.5 L12.5 5" stroke="#e5241a" stroke-width="2" fill="none"/></svg>
<svg class="r" style="left:18px;top:662px" width="17" height="18" viewBox="0 0 17 18"><path d="M4 1 H12 L15 4 V16 H4Z" fill="#fafafa" stroke="#8a8a8a" stroke-width=".9"/><path d="M9 6.5 H14 M9 9 H14 M9 11.5 H14" stroke="#b8c8e0" stroke-width="1"/>
<path d="M1 4.5 H7.5 V2 L12.5 5.5 L7.5 9 V6.8 H1Z" fill="#2f78e0" stroke="#2a62c0" stroke-width=".5"/><path d="M15 11.5 H8.5 V9 L3.5 12.5 L8.5 16 V13.8 H15Z" fill="#2f78e0" stroke="#2a62c0" stroke-width=".5"/></svg>
<div class="r" style="left:19px;top:694px;width:16px;height:4px;background:#ff3a00;"></div>
<div class="r" style="left:56px;top:144px;width:127px;height:25px;background:linear-gradient(#ffffff,#e4e7ec);border:1px solid #6f757c;border-radius:3px;box-shadow:3px 3px 3px rgba(0,0,0,.3);box-sizing:border-box;"></div>
<div class="t g" style="left:62px;top:150.19px;font-size:11px;line-height:14px;font-weight:700;color:#1f2a3a;letter-spacing:0.2px;">Localizar incidencias</div>
<div class="r" style="left:259px;top:168px;width:1191px;height:530px;background:#e9ecf1;border-left:1px solid #959ba3;border-top:1px solid #a9afb6;border-right:1px solid #9ba1a9;box-sizing:border-box;"></div>
<div class="r" style="left:260px;top:169px;width:1px;height:94px;background:#f5f6f8;"></div>
<div class="r" style="left:260px;top:263px;width:1px;height:435px;background:#aeb3b9;"></div>
<div class="r" style="left:263px;top:148px;width:95px;height:21px;background:linear-gradient(#e1e4e9,#d3d7dd);border:1px solid #a9afb6;border-bottom:none;box-sizing:border-box;"></div>
<div class="r" style="left:357px;top:148px;width:176px;height:21px;background:linear-gradient(#e1e4e9,#d3d7dd);border:1px solid #a9afb6;border-bottom:none;box-sizing:border-box;"></div>
<div class="r" style="left:532px;top:146px;width:97px;height:23px;background:#e9ecf1;border:1px solid #a9afb6;border-bottom:none;box-sizing:border-box;"></div>
<div class="t" style="left:271px;top:152.19px;font-size:11px;line-height:14px;font-weight:400;color:#2f3540;letter-spacing:-0.15px;">Calendario</div>
<div class="t" style="left:366px;top:152.19px;font-size:11px;line-height:14px;font-weight:400;color:#2f3540;letter-spacing:-0.15px;">Mis comunicados activos</div>
<div class="t g" style="left:541px;top:151.34px;font-size:12px;line-height:15px;font-weight:700;color:#1f232a;letter-spacing:0.05px;">Inmuebles</div>
<svg class="r" style="left:612px;top:153px" width="11" height="9" viewBox="0 0 11 9"><path d="M1.8 1.5 L9.2 8.2 M9.2 1.5 L1.8 8.2" stroke="#5a5e64" stroke-width="2"/></svg>
<svg class="r" style="left:1432px;top:153px" width="10" height="6" viewBox="0 0 10 6"><path d="M1 1 L9 1 L5 5 Z" fill="#1e3f9e"/></svg>
<div class="r" style="left:272px;top:179px;width:397px;height:76px;background:#e9ecf1;border:1px solid #b3b9c0;border-radius:2px;box-sizing:border-box;"></div>
<div class="r" style="left:273px;top:180px;width:19px;height:74px;background:linear-gradient(90deg,#e3e6ea,#d9dde2);border-right:1px solid #c6cbd1;box-sizing:border-box;"></div>
<div class="t" style="left:282px;top:218px;transform:translate(-50%,-50%) rotate(-90deg);font-size:11px;line-height:13px;color:#2f3540;letter-spacing:-0.1px;">Buscar por</div>
<div class="t" style="left:300px;top:185.19px;font-size:11px;line-height:14px;font-weight:400;color:#2f3540;letter-spacing:0.0px;">Operación:</div>
<div class="t" style="left:300px;top:209.19px;font-size:11px;line-height:14px;font-weight:400;color:#2f3540;letter-spacing:0.15px;">Dirección:</div>
<div class="t" style="left:300px;top:233.19px;font-size:11px;line-height:14px;font-weight:400;color:#2f3540;letter-spacing:0.25px;">Contacto:</div>
<div class="t" style="left:480px;top:185.19px;font-size:11px;line-height:14px;font-weight:400;color:#2f3540;letter-spacing:0.35px;">Estado:</div>
<div class="r" style="left:357px;top:182px;width:120px;height:20px;background:#fff;border:1px solid #a5acb5;box-sizing:border-box;"></div>
<div class="r" style="left:460px;top:183px;width:16px;height:18px;background:linear-gradient(#f4f5f7,#e3e6ea);border-left:1px solid #c5cad0;box-sizing:border-box;"></div>
<svg class="r" style="left:464px;top:190px" width="9" height="5" viewBox="0 0 9 5"><path d="M0.5 0.5 L8.5 0.5 L4.5 4.5 Z" fill="#5f6670"/></svg>
<div class="t" style="left:360px;top:185.19px;font-size:11px;line-height:14px;font-weight:400;color:#222;letter-spacing:-0.1px;">Todos</div>
<div class="r" style="left:538px;top:182px;width:127px;height:20px;background:#fff;border:1px solid #a5acb5;box-sizing:border-box;"></div>
<div class="r" style="left:648px;top:183px;width:16px;height:18px;background:linear-gradient(#f4f5f7,#e3e6ea);border-left:1px solid #c5cad0;box-sizing:border-box;"></div>
<svg class="r" style="left:652px;top:190px" width="9" height="5" viewBox="0 0 9 5"><path d="M0.5 0.5 L8.5 0.5 L4.5 4.5 Z" fill="#5f6670"/></svg>
<div class="t" style="left:541px;top:185.19px;font-size:11px;line-height:14px;font-weight:400;color:#222;letter-spacing:-0.1px;">Activo</div>
<div class="r" style="left:357px;top:206px;width:308px;height:20px;background:#fff;border:1px solid #a5acb5;box-sizing:border-box;"></div>
<div class="r" style="left:357px;top:230px;width:308px;height:20px;background:#fff;border:1px solid #a5acb5;box-sizing:border-box;"></div>
<div class="r" style="left:692px;top:179px;width:120px;height:26px;background:linear-gradient(#f7f8fa,#e6e9ed);border:1px solid #b9bec5;border-radius:3px;box-sizing:border-box;"></div>
<div class="t" style="left:744px;top:185.19px;font-size:11px;line-height:14px;font-weight:400;color:#2f3540;letter-spacing:-0.1px;">Buscar</div>
<svg class="r" style="left:695px;top:183px" width="18" height="18" viewBox="0 0 18 18"><defs><radialGradient id="lens2" cx=".4" cy=".35" r=".7"><stop offset="0" stop-color="#ffffff"/><stop offset=".5" stop-color="#c5e6f8"/><stop offset="1" stop-color="#7ab8e0"/></radialGradient></defs>
<path d="M8.5 10 L2.5 15.5" stroke="#8a5a2a" stroke-width="3" stroke-linecap="round"/><path d="M8.5 10 L2.5 15.5" stroke="#f0a040" stroke-width="2" stroke-linecap="round"/>
<circle cx="11.5" cy="6.5" r="5" fill="url(#lens2)" stroke="#5f7f9f" stroke-width="1.2"/></svg>
<div class="r" style="left:692px;top:247px;width:13px;height:13px;background:linear-gradient(#e2e4e7,#f2f3f5);border:1px solid #9ea4ab;box-shadow:inset 0 0 0 1px #fff;box-sizing:border-box;"></div>
<div class="t" style="left:708px;top:247.19px;font-size:11px;line-height:14px;font-weight:400;color:#2f3540;letter-spacing:0.02px;">Solicitar filtro al entrar</div>
<div class="r" style="left:261px;top:263px;width:1187px;height:417px;background:#fff;"></div>
<div class="r" style="left:261px;top:263px;width:1187px;height:21px;background:linear-gradient(#f3f4f6,#e9ecf0);border-top:1px solid #a5abb3;border-bottom:1px solid #a5abb3;box-sizing:border-box;"></div>
<div class="r" style="left:276px;top:264px;width:1px;height:103px;background:#d5d9de;"></div>
<div class="r" style="left:276px;top:264px;width:1px;height:19px;background:#c3c8cf;"></div>
<div class="r" style="left:356px;top:264px;width:1px;height:103px;background:#d5d9de;"></div>
<div class="r" style="left:356px;top:264px;width:1px;height:19px;background:#c3c8cf;"></div>
<div class="r" style="left:474px;top:264px;width:1px;height:103px;background:#d5d9de;"></div>
<div class="r" style="left:474px;top:264px;width:1px;height:19px;background:#c3c8cf;"></div>
<div class="r" style="left:554px;top:264px;width:1px;height:103px;background:#d5d9de;"></div>
<div class="r" style="left:554px;top:264px;width:1px;height:19px;background:#c3c8cf;"></div>
<div class="r" style="left:634px;top:264px;width:1px;height:103px;background:#d5d9de;"></div>
<div class="r" style="left:634px;top:264px;width:1px;height:19px;background:#c3c8cf;"></div>
<div class="r" style="left:740px;top:264px;width:1px;height:103px;background:#d5d9de;"></div>
<div class="r" style="left:740px;top:264px;width:1px;height:19px;background:#c3c8cf;"></div>
<div class="r" style="left:1040px;top:264px;width:1px;height:103px;background:#d5d9de;"></div>
<div class="r" style="left:1040px;top:264px;width:1px;height:19px;background:#c3c8cf;"></div>
<div class="r" style="left:1144px;top:264px;width:1px;height:103px;background:#d5d9de;"></div>
<div class="r" style="left:1144px;top:264px;width:1px;height:19px;background:#c3c8cf;"></div>
<div class="r" style="left:1273px;top:264px;width:1px;height:103px;background:#d5d9de;"></div>
<div class="r" style="left:1273px;top:264px;width:1px;height:19px;background:#c3c8cf;"></div>
<div class="r" style="left:1398px;top:264px;width:1px;height:103px;background:#d5d9de;"></div>
<div class="r" style="left:1398px;top:264px;width:1px;height:19px;background:#c3c8cf;"></div>
<div class="r" style="left:261px;top:263px;width:16px;height:21px;background:#f4f5f7;border:1px solid #a9afb6;box-sizing:border-box;"></div>
<div class="r" style="left:261px;top:283px;width:16px;height:22px;background:#f4f5f7;border:1px solid #a9afb6;box-sizing:border-box;"></div>
<div class="r" style="left:261px;top:304px;width:16px;height:22px;background:#f4f5f7;border:1px solid #a9afb6;box-sizing:border-box;"></div>
<div class="r" style="left:261px;top:325px;width:16px;height:22px;background:#f4f5f7;border:1px solid #a9afb6;box-sizing:border-box;"></div>
<div class="r" style="left:261px;top:346px;width:16px;height:22px;background:#f4f5f7;border:1px solid #a9afb6;box-sizing:border-box;"></div>
<div class="t" style="left:360px;top:266.19px;font-size:11px;line-height:14px;font-weight:400;color:#2f3a4a;letter-spacing:0.0px;">Barrio</div>
<div class="t" style="left:478px;top:266.19px;font-size:11px;line-height:14px;font-weight:400;color:#2f3a4a;letter-spacing:-0.2px;">Estado alquiler</div>
<div class="t" style="left:558px;top:266.19px;font-size:11px;line-height:14px;font-weight:400;color:#2f3a4a;letter-spacing:0.0px;">Estado venta</div>
<div class="t" style="left:638px;top:266.19px;font-size:11px;line-height:14px;font-weight:400;color:#2f3a4a;letter-spacing:-0.1px;">Fecha de creación</div>
<div class="t" style="left:744px;top:266.19px;font-size:11px;line-height:14px;font-weight:400;color:#2f3a4a;letter-spacing:0.02px;">Categorías</div>
<div class="t" style="left:1044px;top:266.19px;font-size:11px;line-height:14px;font-weight:400;color:#2f3a4a;letter-spacing:0.02px;">Referencia interna</div>
<div class="t" style="left:1148px;top:266.19px;font-size:11px;line-height:14px;font-weight:400;color:#2f3a4a;letter-spacing:0.02px;">Importe traspaso alquiler</div>
<div class="t" style="left:1277px;top:266.19px;font-size:11px;line-height:14px;font-weight:400;color:#2f3a4a;letter-spacing:0.02px;">Importe traspaso venta</div>
<div class="t" style="left:1402px;top:266.19px;font-size:11px;line-height:14px;font-weight:400;color:#2f3a4a;letter-spacing:0.02px;">Tipo departamento</div>
<div class="r" style="left:1398px;top:264px;width:50px;height:103px;overflow:hidden"></div>
<div class="r" style="left:277px;top:304px;width:1171px;height:1px;background:#d9dce1;"></div>
<div class="r" style="left:277px;top:325px;width:1171px;height:1px;background:#d9dce1;"></div>
<div class="r" style="left:277px;top:346px;width:1171px;height:1px;background:#d9dce1;"></div>
<div class="r" style="left:277px;top:367px;width:1171px;height:1px;background:#d9dce1;"></div>
<div class="r" style="left:277px;top:284px;width:1170px;height:21px;border:1px dotted #222;box-sizing:border-box;"></div>
<svg class="r" style="left:267px;top:291px" width="5" height="8" viewBox="0 0 5 8"><path d="M0 0 L4.5 3.7 L0 7.4 Z" fill="#7a818b"/></svg>
<div class="t g" style="left:559px;top:287.19px;font-size:11px;line-height:14px;font-weight:700;color:#111;letter-spacing:0.4px;">Activo</div>
<div class="t g" style="left:639px;top:287.19px;font-size:11px;line-height:14px;font-weight:700;color:#111;letter-spacing:1.35px;">01/07/2022</div>
<div class="t g" style="left:743px;top:287px;width:78px;height:15px;box-sizing:border-box;background:#f00000;border:1px solid #222;border-radius:3px;font-size:11px;line-height:13px;font-weight:700;color:#000;text-align:center;letter-spacing:0.05px;text-indent:0.05px;">Con inquilino</div>
<div class="t g" style="left:825px;top:287px;width:58px;height:15px;box-sizing:border-box;background:#fbdcb8;border:1px solid #222;border-radius:3px;font-size:11px;line-height:13px;font-weight:700;color:#000;text-align:center;letter-spacing:0.25px;text-indent:0.25px;">De banco</div>
<div class="t g" style="left:1045px;top:287.19px;font-size:11px;line-height:14px;font-weight:700;color:#111;letter-spacing:0.7px;">PIS201V</div>
<div class="t g" style="left:1273px;width:122px;text-align:right;top:287.2px;font-size:11px;line-height:14px;font-weight:700;color:#111;letter-spacing:0.8px;">0,00</div>
<div class="t g" style="left:1144px;width:127px;text-align:right;top:287.2px;font-size:11px;line-height:14px;font-weight:700;color:#111;letter-spacing:0.8px;">0,00</div>
<div class="r" style="left:1399px;top:284px;width:48px;height:20px;overflow:hidden"><div class="t g" style="left:4px;top:3.2px;font-size:11px;line-height:14px;font-weight:700;color:#111;letter-spacing:0.5px;">Piso</div></div>
<div class="t g" style="left:478px;top:308.19px;font-size:11px;line-height:14px;font-weight:700;color:#111;letter-spacing:0.4px;">Activo</div>
<div class="t g" style="left:559px;top:308.19px;font-size:11px;line-height:14px;font-weight:700;color:#111;letter-spacing:0.4px;">Activo</div>
<div class="t g" style="left:639px;top:308.19px;font-size:11px;line-height:14px;font-weight:700;color:#111;letter-spacing:1.35px;">01/07/2022</div>
<div class="t g" style="left:743px;top:308px;width:169px;height:15px;box-sizing:border-box;background:#c2c2fb;border:1px solid #222;border-radius:3px;font-size:11px;line-height:13px;font-weight:700;color:#000;text-align:center;letter-spacing:0.38px;text-indent:0.38px;">De propietario de comunidad</div>
<div class="t g" style="left:916px;top:308px;width:74px;height:15px;box-sizing:border-box;background:#7af07a;border:1px solid #222;border-radius:3px;font-size:11px;line-height:13px;font-weight:700;color:#000;text-align:center;letter-spacing:0.05px;text-indent:0.05px;">Sin inquilino</div>
<div class="t g" style="left:1045px;top:308.19px;font-size:11px;line-height:14px;font-weight:700;color:#111;letter-spacing:0.7px;">PIS202VA</div>
<div class="t g" style="left:1273px;width:122px;text-align:right;top:308.2px;font-size:11px;line-height:14px;font-weight:700;color:#111;letter-spacing:0.8px;">0,00</div>
<div class="t g" style="left:1144px;width:127px;text-align:right;top:308.2px;font-size:11px;line-height:14px;font-weight:700;color:#111;letter-spacing:0.8px;">0,00</div>
<div class="r" style="left:1399px;top:305px;width:48px;height:20px;overflow:hidden"><div class="t g" style="left:4px;top:3.2px;font-size:11px;line-height:14px;font-weight:700;color:#111;letter-spacing:0.5px;">Piso</div></div>
<div class="t g" style="left:559px;top:329.19px;font-size:11px;line-height:14px;font-weight:700;color:#111;letter-spacing:0.4px;">Activo</div>
<div class="t g" style="left:639px;top:329.19px;font-size:11px;line-height:14px;font-weight:700;color:#111;letter-spacing:1.35px;">01/07/2022</div>
<div class="t g" style="left:743px;top:329px;width:98px;height:15px;box-sizing:border-box;background:#c6fbc6;border:1px solid #222;border-radius:3px;font-size:11px;line-height:13px;font-weight:700;color:#000;text-align:center;letter-spacing:0.45px;text-indent:0.45px;">De gran tenedor</div>
<div class="t g" style="left:846px;top:329px;width:73px;height:15px;box-sizing:border-box;background:#7af07a;border:1px solid #222;border-radius:3px;font-size:11px;line-height:13px;font-weight:700;color:#000;text-align:center;letter-spacing:0.05px;text-indent:0.05px;">Sin inquilino</div>
<div class="t g" style="left:1045px;top:329.19px;font-size:11px;line-height:14px;font-weight:700;color:#111;letter-spacing:0.7px;">PIS203V</div>
<div class="t g" style="left:1273px;width:122px;text-align:right;top:329.2px;font-size:11px;line-height:14px;font-weight:700;color:#111;letter-spacing:0.8px;">0,00</div>
<div class="t g" style="left:1144px;width:127px;text-align:right;top:329.2px;font-size:11px;line-height:14px;font-weight:700;color:#111;letter-spacing:0.8px;">0,00</div>
<div class="r" style="left:1399px;top:326px;width:48px;height:20px;overflow:hidden"><div class="t g" style="left:4px;top:3.2px;font-size:11px;line-height:14px;font-weight:700;color:#111;letter-spacing:0.5px;">Piso</div></div>
<div class="t g" style="left:478px;top:350.19px;font-size:11px;line-height:14px;font-weight:700;color:#111;letter-spacing:0.4px;">Activo</div>
<div class="t g" style="left:639px;top:350.19px;font-size:11px;line-height:14px;font-weight:700;color:#111;letter-spacing:1.35px;">01/07/2022</div>
<div class="t g" style="left:743px;top:350px;width:80px;height:15px;box-sizing:border-box;background:#18bcbc;border:1px solid #222;border-radius:3px;font-size:11px;line-height:13px;font-weight:700;color:#000;text-align:center;letter-spacing:0.22px;text-indent:0.22px;">Con traspaso</div>
<div class="t g" style="left:1045px;top:350.19px;font-size:11px;line-height:14px;font-weight:700;color:#111;letter-spacing:0.7px;">PLA210A</div>
<div class="t g" style="left:1273px;width:122px;text-align:right;top:350.2px;font-size:11px;line-height:14px;font-weight:700;color:#111;letter-spacing:0.8px;">0,00</div>
<div class="t g" style="left:1144px;width:127px;text-align:right;top:350.2px;font-size:11px;line-height:14px;font-weight:700;color:#111;letter-spacing:0.8px;">0,00</div>
<div class="r" style="left:1399px;top:347px;width:48px;height:20px;overflow:hidden"><div class="t g" style="left:4px;top:3.2px;font-size:11px;line-height:14px;font-weight:700;color:#111;letter-spacing:0.5px;">Plaza de garaje</div></div>
<div class="r" style="left:739px;top:261px;width:304px;height:114px;border:2px solid #ee1111;box-sizing:border-box;"></div>
<svg class="r" style="left:1030px;top:267px" width="7" height="7" viewBox="0 0 7 7"><path d="M0.5 0.5 L6.5 0.5 L4 3.5 L4 6.5 L3 6.5 L3 3.5 Z" fill="#9aa0a8"/></svg>
<div class="r" style="left:261px;top:680px;width:1187px;height:17px;background:linear-gradient(#ebebec,#fafafa);"></div>
<div class="r" style="left:261px;top:680px;width:32px;height:17px;background:linear-gradient(#f1f3f6,#e7eaee);"></div>
<div class="r" style="left:376px;top:680px;width:30px;height:17px;background:linear-gradient(#f1f3f6,#e7eaee);"></div>
<div class="r" style="left:293px;top:680px;width:83px;height:17px;background:#fff;"></div>
<div class="t" style="left:297px;top:682.19px;font-size:11px;line-height:14px;font-weight:400;color:#111;letter-spacing:-0.1px;">Registro 1 de 4</div>
<div class="r" style="left:259px;top:697px;width:1192px;height:1px;background:#9ba1a9;"></div>
<div class="r" style="left:971px;top:681px;width:396px;height:15px;background:linear-gradient(#f1f2f4,#e3e6ea);border:1px solid #a9afb6;border-radius:2px;box-sizing:border-box;"></div>
<div class="r" style="left:1165px;top:685px;width:1px;height:7px;background:#555;"></div>
<div class="r" style="left:1167px;top:685px;width:1px;height:7px;background:#555;"></div>
<div class="r" style="left:1169px;top:685px;width:1px;height:7px;background:#555;"></div>
<div class="r" style="left:1171px;top:685px;width:1px;height:7px;background:#555;"></div>
<div class="r" style="left:434px;top:688px;width:524px;height:2px;background:#f00000;"></div>
<svg class="r" style="left:952px;top:684px" width="16" height="9" viewBox="0 0 16 9"><path d="M0 4.5 L15 4.5 M6 0 L16 4.5 L6 9 Z" fill="#f00000"/></svg>
<svg class="r" style="left:266px;top:684px" width="10" height="9" viewBox="0 0 10 9"><path d="M1 0 L1 9 M9 0 L4 4.5 L9 9 Z M5 0 L1 4.5 L5 9Z" fill="#9ba0a7" stroke="none"/><rect x="0" y="0" width="1.5" height="9" fill="#9ba0a7"/></svg>
<svg class="r" style="left:282px;top:684px" width="5" height="9" viewBox="0 0 5 9"><path d="M5 0 L0 4.5 L5 9 Z" fill="#9ba0a7"/></svg>
<svg class="r" style="left:381px;top:684px" width="5" height="9" viewBox="0 0 5 9"><path d="M0 0 L5 4.5 L0 9 Z" fill="#6b7280"/></svg>
<svg class="r" style="left:394px;top:684px" width="10" height="9" viewBox="0 0 10 9"><path d="M0 0 L4 4.5 L0 9 Z M4 0 L8 4.5 L4 9Z" fill="#6b7280"/><rect x="8.5" y="0" width="1.5" height="9" fill="#6b7280"/></svg>
<svg class="r" style="left:412px;top:684px" width="5" height="9" viewBox="0 0 5 9"><path d="M5 0 L0 4.5 L5 9 Z" fill="#505660"/></svg>
<svg class="r" style="left:1436px;top:684px" width="6" height="9" viewBox="0 0 6 9"><path d="M0 0 L6 4.5 L0 9 Z" fill="#505660"/></svg>
</body></html>
